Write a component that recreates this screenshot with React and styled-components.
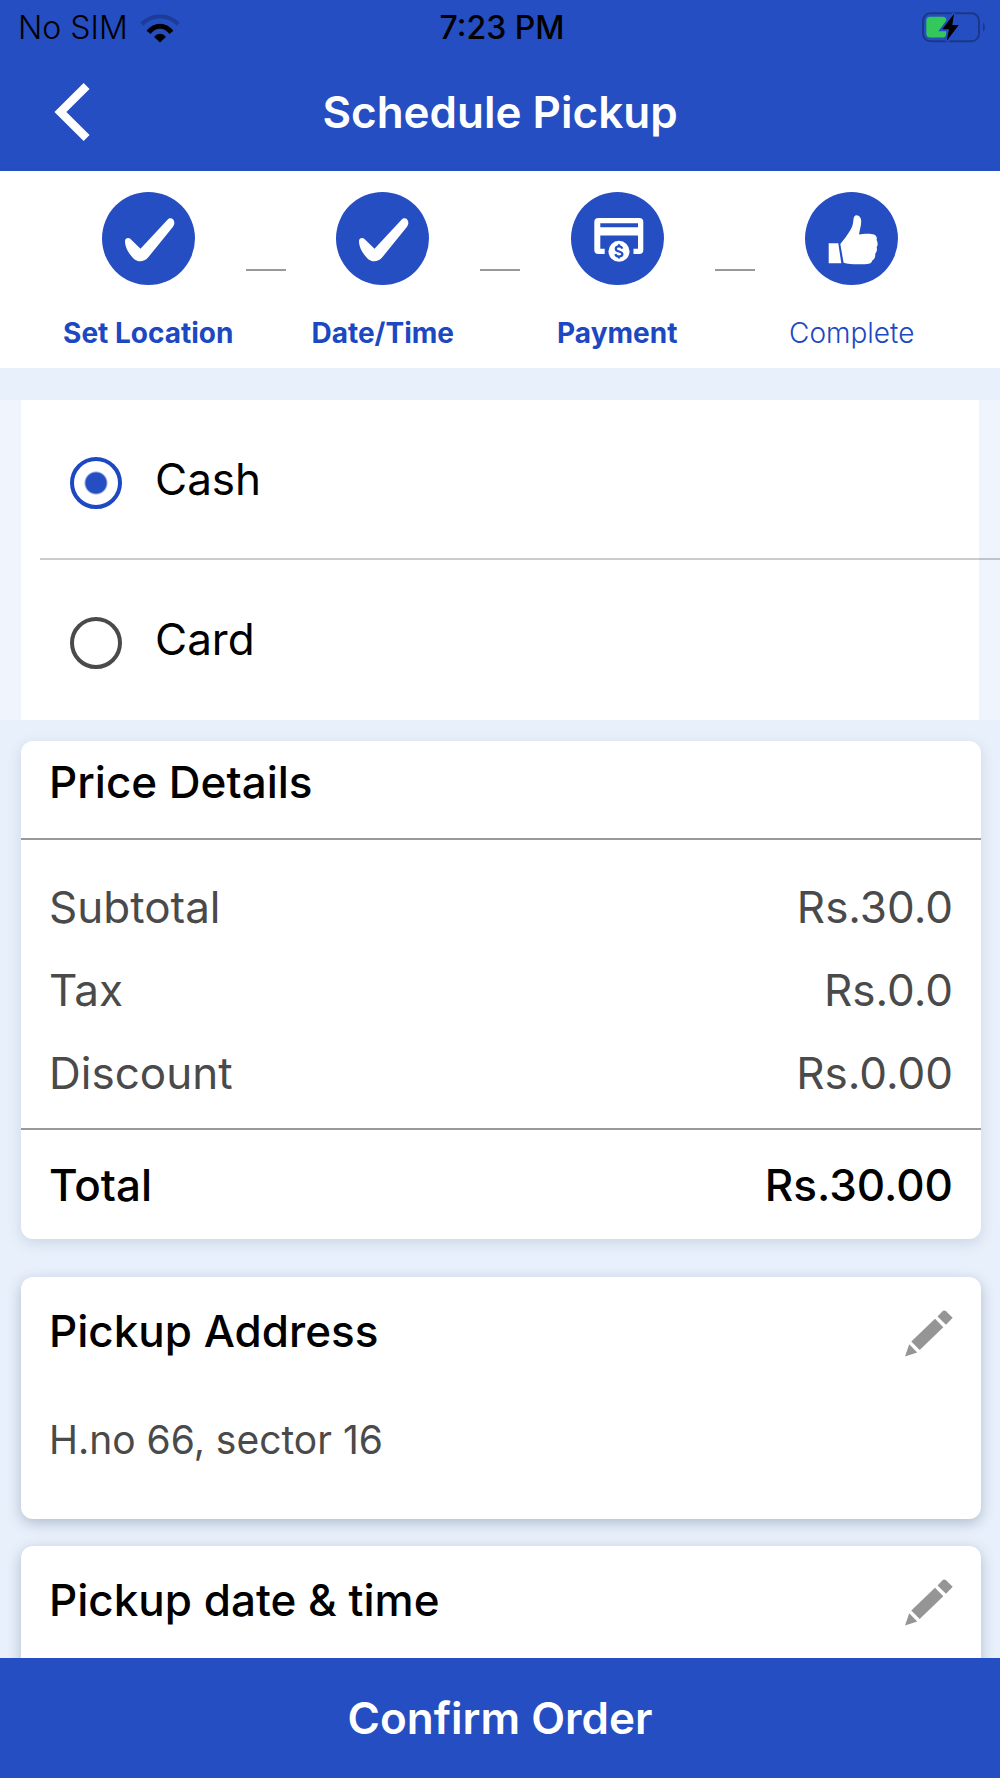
import React, { useState } from "react";
import styled, { createGlobalStyle } from "styled-components";

const BLUE = "#254ec2";
const INK = "#4a4a4a";

const GlobalStyle = createGlobalStyle`
  *, *::before, *::after { box-sizing: border-box; }
  body {
    margin: 0;
    font-family: Inter, "Liberation Sans", sans-serif;
    color: #000;
    background: #e8f0fb;
  }
  h1, h2, p, dl, dd, ol, fieldset { margin: 0; padding: 0; border: 0; }
  ol { list-style: none; }
  button { padding: 0; border: 0; background: none; font: inherit; cursor: pointer; }
  svg { display: block; }
`;

const Screen = styled.div`
  display: flex;
  flex-direction: column;
  height: 100vh;
  overflow: hidden;
`;

const Header = styled.header`
  flex: none;
  background: ${BLUE};
`;

const StatusBar = styled.div`
  display: grid;
  grid-template-columns: 1fr auto 1fr;
  align-items: center;
  height: 55px;
  padding: 0 14px 0 18px;
  font-size: 32px;
  line-height: 36px;
`;

const Carrier = styled.div`
  display: flex;
  align-items: center;
  gap: 12px;
  font-weight: 300;
`;

const Clock = styled.div`
  font-weight: 500;
`;

const Battery = styled.div`
  justify-self: end;
`;

const NavBar = styled.nav`
  display: grid;
  grid-template-columns: 1fr auto 1fr;
  align-items: center;
  height: 116px;
  padding: 0 54px 3px;
`;

const BackButton = styled.button`
  justify-self: start;
`;

const Title = styled.h1`
  color: #fff;
  font-size: 44px;
  line-height: 52px;
  font-weight: 600;
`;

const Stepper = styled.ol`
  flex: none;
  display: flex;
  padding: 21px 51px 19px;
  background: #fff;
`;

const Step = styled.li`
  flex: 1 1 0;
  min-width: 0;
  display: flex;
  flex-direction: column;
  align-items: center;
  gap: 32px;
`;

const StepCircle = styled.span`
  width: 93px;
  height: 93px;
  border-radius: 50%;
  background: ${BLUE};
`;

const StepLabel = styled.span`
  color: #1c48c1;
  font-size: 28px;
  line-height: 32px;
  font-weight: ${(p) => (p.$done ? 700 : 300)};
  white-space: nowrap;
`;

const StepLine = styled.li`
  flex: none;
  width: 40px;
  height: 2px;
  margin-top: 77px;
  background: #999;
`;

const Content = styled.main`
  flex: 1;
  min-height: 0;
  overflow-y: auto;
  scrollbar-width: none;
  padding-top: 32px;
`;

const MethodBand = styled.fieldset`
  min-width: 0;
  padding: 0 21px;
  background: #eff4fd;
`;

const MethodList = styled.div`
  background: #fff;
`;

const MethodRow = styled.label`
  display: flex;
  align-items: flex-start;
  gap: 33px;
  height: 160px;
  padding: 57px 49px 0;
  font-size: 44px;
  line-height: 44px;
  cursor: pointer;
`;

const MethodDivider = styled.div`
  height: 2px;
  margin: -2px -21px 0 19px;
  background: rgba(0, 0, 0, 0.2);
`;

const Radio = styled.input`
  appearance: none;
  flex: none;
  width: 52px;
  height: 52px;
  margin: 0;
  border: 4px solid ${INK};
  border-radius: 50%;
  &:checked {
    border-color: #1c48c1;
    background: radial-gradient(circle, ${BLUE} 10px, transparent 12px);
  }
`;

const Card = styled.section`
  margin: 0 19px 27px 21px;
  border-radius: 12px;
  background: #fff;
  box-shadow: 0 4px 14px rgba(50, 70, 100, ${(p) => (p.$raised ? 0.3 : 0.15)});
`;

const PriceCard = styled(Card)`
  margin-top: 21px;
  margin-bottom: 38px;
`;

const CardTitle = styled.h2`
  font-size: 44px;
  line-height: 52px;
  font-weight: 500;
`;

const PriceHeader = styled.div`
  padding: 15px 28px 30px;
  border-bottom: 2px solid #999;
`;

const PriceRows = styled.div`
  display: flex;
  flex-direction: column;
  gap: 31px;
  padding: 41px 28px 29px;
  color: ${INK};
`;

const PriceRow = styled.div`
  display: flex;
  justify-content: space-between;
  font-size: 44px;
  line-height: 52px;
`;

const TotalRow = styled(PriceRow)`
  padding: 29px 28px 28px;
  border-top: 2px solid #999;
  font-weight: 500;
`;

const DetailHeader = styled.div`
  display: flex;
  justify-content: space-between;
  align-items: flex-end;
  padding: 28px 28px 0;
`;

const DetailText = styled.p`
  min-height: 52px;
  margin: 57px 28px 0;
  padding-bottom: 53px;
  color: ${INK};
  font-size: 39px;
  line-height: 52px;
`;

const ConfirmButton = styled.button`
  flex: none;
  height: 120px;
  background: ${BLUE};
  color: #fff;
  font-size: 44px;
  line-height: 52px;
  font-weight: 600;
`;

const WifiIcon = () => (
  <svg width="40" height="30" viewBox="0 0 40 30" fill="none" aria-hidden="true">
    <path d="M1.8 11.2C12 .7 28 .7 38.2 11.2" stroke="#000" strokeOpacity=".22" strokeWidth="4.4" />
    <path d="M8.6 19.4C15 11.2 25 11.2 31.4 19.4" stroke="#000" strokeWidth="5" />
    <path d="M14.2 24C17.5 19.8 22.5 19.8 25.8 24L20 29.5Z" fill="#000" />
  </svg>
);

const BatteryIcon = () => (
  <svg width="66" height="34" viewBox="0 0 66 34" fill="none" aria-hidden="true">
    <rect x="3" y="2.3" width="56" height="28" rx="7.5" stroke="#1b3788" strokeWidth="2" />
    <path d="M63 11.7C65.6 13.4 65.6 19 63 20.7Z" fill="#1b3788" />
    <rect x="6.3" y="5.8" width="20.2" height="20.6" rx="4" fill="#34c759" />
    <path
      d="M34 2.7L22.3 18.3H29L26.7 30L38.7 14H32.3Z"
      fill="#000"
      stroke={BLUE}
      strokeWidth="4"
      paintOrder="stroke"
    />
  </svg>
);

const BackIcon = () => (
  <svg width="37" height="60" viewBox="0 0 37 60" fill="none" aria-hidden="true">
    <path d="M32.6 3.9L6.4 30L32.6 56.1" stroke="#fff" strokeWidth="8.4" />
  </svg>
);

const CheckIcon = () => (
  <svg width="93" height="93" viewBox="0 0 93 93" aria-hidden="true">
    <path
      fill="#fff"
      d="M23 49C23 46 26.5 45 28.5 47L38.5 56.7L65.5 27.8C68.5 24.6 72.8 27 72.3 31.5C72.1 33 71.2 34.5 70 36L46.5 65C42 70.5 35.5 70.5 31.5 66.5C27 62 23 55.5 23 49Z"
    />
  </svg>
);

const PaymentIcon = () => (
  <svg width="93" height="93" viewBox="0 0 93 93" aria-hidden="true">
    <path
      fill="#fff"
      fillRule="evenodd"
      d="M27.3 26H68.3A4 4 0 0 1 72.3 30V58A4 4 0 0 1 68.3 62H62.5V56.7H67V43.5H29.3V56.7H33.7V62H27.3A4 4 0 0 1 23.3 58V30A4 4 0 0 1 27.3 26ZM29.3 31.3V35.3H67V31.3Z"
    />
    <circle cx="48" cy="59.3" r="10.5" fill="#fff" />
    <path
      fill="none"
      stroke={BLUE}
      strokeWidth="2.2"
      d="M51.3 56.6C50.6 54.8 49.4 54.4 48 54.4C46 54.4 44.8 55.4 44.8 56.9C44.8 60.3 51.4 58.6 51.4 62.1C51.4 63.6 50 64.5 48 64.5C46.2 64.5 44.9 63.8 44.4 62.1M48 52.2V54.6M48 64.2V66.6"
    />
  </svg>
);

const ThumbIcon = () => (
  <svg width="93" height="93" viewBox="0 0 93 93" aria-hidden="true">
    <path
      fill="#fff"
      d="M23.7 51.3H33.3L36.3 71.3H23.7ZM35.3 52C39.5 47 45.5 39 47.3 34C48.7 30 48 26.5 49.3 24.4C50.8 22.5 53.8 23.3 55.2 25.6C57.7 29.6 54.8 37 54 42.4C58 41.8 66 41.3 69 42.6C71.6 43.8 72.3 46 71.5 48C73 49.8 73 53.5 71.6 55C72.4 57.6 71.8 60.4 70.2 61.7C70.6 65 69.4 67.2 67.5 68.2C66.7 71 64.6 71.9 62 72C55 72.5 44 72.6 38.6 70.8Z"
    />
  </svg>
);

const PencilIcon = () => (
  <svg width="48" height="47" viewBox="0 0 48 47" fill="#959595" aria-hidden="true">
    <path d="M0 46.5L4.2 34.2L12.2 42.4Z" />
    <path d="M6.3 31.4L30 8.7L38.3 17.3L14.7 40Z" />
    <path d="M32.5 6.6L37.3 1.4Q39 -.3 41 1.3L47.7 7.7L41 14.8Z" />
  </svg>
);

const steps = [
  { label: "Set Location", Icon: CheckIcon, done: true },
  { label: "Date/Time", Icon: CheckIcon, done: true },
  { label: "Payment", Icon: PaymentIcon, done: true },
  { label: "Complete", Icon: ThumbIcon, done: false },
];

const prices = [
  ["Subtotal", "Rs.30.0"],
  ["Tax", "Rs.0.0"],
  ["Discount", "Rs.0.00"],
];

const methods = ["Cash", "Card"];

export default function App() {
  const [method, setMethod] = useState("Cash");

  return (
    <>
      <GlobalStyle />
      <Screen>
        <Header>
          <StatusBar>
            <Carrier>
              No SIM
              <WifiIcon />
            </Carrier>
            <Clock>7:23 PM</Clock>
            <Battery>
              <BatteryIcon />
            </Battery>
          </StatusBar>
          <NavBar>
            <BackButton type="button" aria-label="Back">
              <BackIcon />
            </BackButton>
            <Title>Schedule Pickup</Title>
          </NavBar>
        </Header>

        <Stepper>
          {steps.map(({ label, Icon, done }, i) => (
            <React.Fragment key={label}>
              {i > 0 && <StepLine aria-hidden="true" />}
              <Step>
                <StepCircle>
                  <Icon />
                </StepCircle>
                <StepLabel $done={done}>{label}</StepLabel>
              </Step>
            </React.Fragment>
          ))}
        </Stepper>

        <Content>
          <MethodBand aria-label="Payment method">
            <MethodList>
              {methods.map((name, i) => (
                <React.Fragment key={name}>
                  {i > 0 && <MethodDivider />}
                  <MethodRow htmlFor={`method-${name}`}>
                    <Radio
                      type="radio"
                      id={`method-${name}`}
                      name="method"
                      value={name}
                      checked={method === name}
                      onChange={() => setMethod(name)}
                    />
                    {name}
                  </MethodRow>
                </React.Fragment>
              ))}
            </MethodList>
          </MethodBand>

          <PriceCard>
            <PriceHeader>
              <CardTitle>Price Details</CardTitle>
            </PriceHeader>
            <dl>
              <PriceRows>
                {prices.map(([name, value]) => (
                  <PriceRow key={name}>
                    <dt>{name}</dt>
                    <dd>{value}</dd>
                  </PriceRow>
                ))}
              </PriceRows>
              <TotalRow>
                <dt>Total</dt>
                <dd>Rs.30.00</dd>
              </TotalRow>
            </dl>
          </PriceCard>

          <Card $raised>
            <DetailHeader>
              <CardTitle>Pickup Address</CardTitle>
              <button type="button" aria-label="Edit pickup address">
                <PencilIcon />
              </button>
            </DetailHeader>
            <DetailText>H.no 66, sector 16</DetailText>
          </Card>

          <Card $raised>
            <DetailHeader>
              <CardTitle>Pickup date &amp; time</CardTitle>
              <button type="button" aria-label="Edit pickup date and time">
                <PencilIcon />
              </button>
            </DetailHeader>
            <DetailText />
          </Card>
        </Content>

        <ConfirmButton type="button">Confirm Order</ConfirmButton>
      </Screen>
    </>
  );
}
